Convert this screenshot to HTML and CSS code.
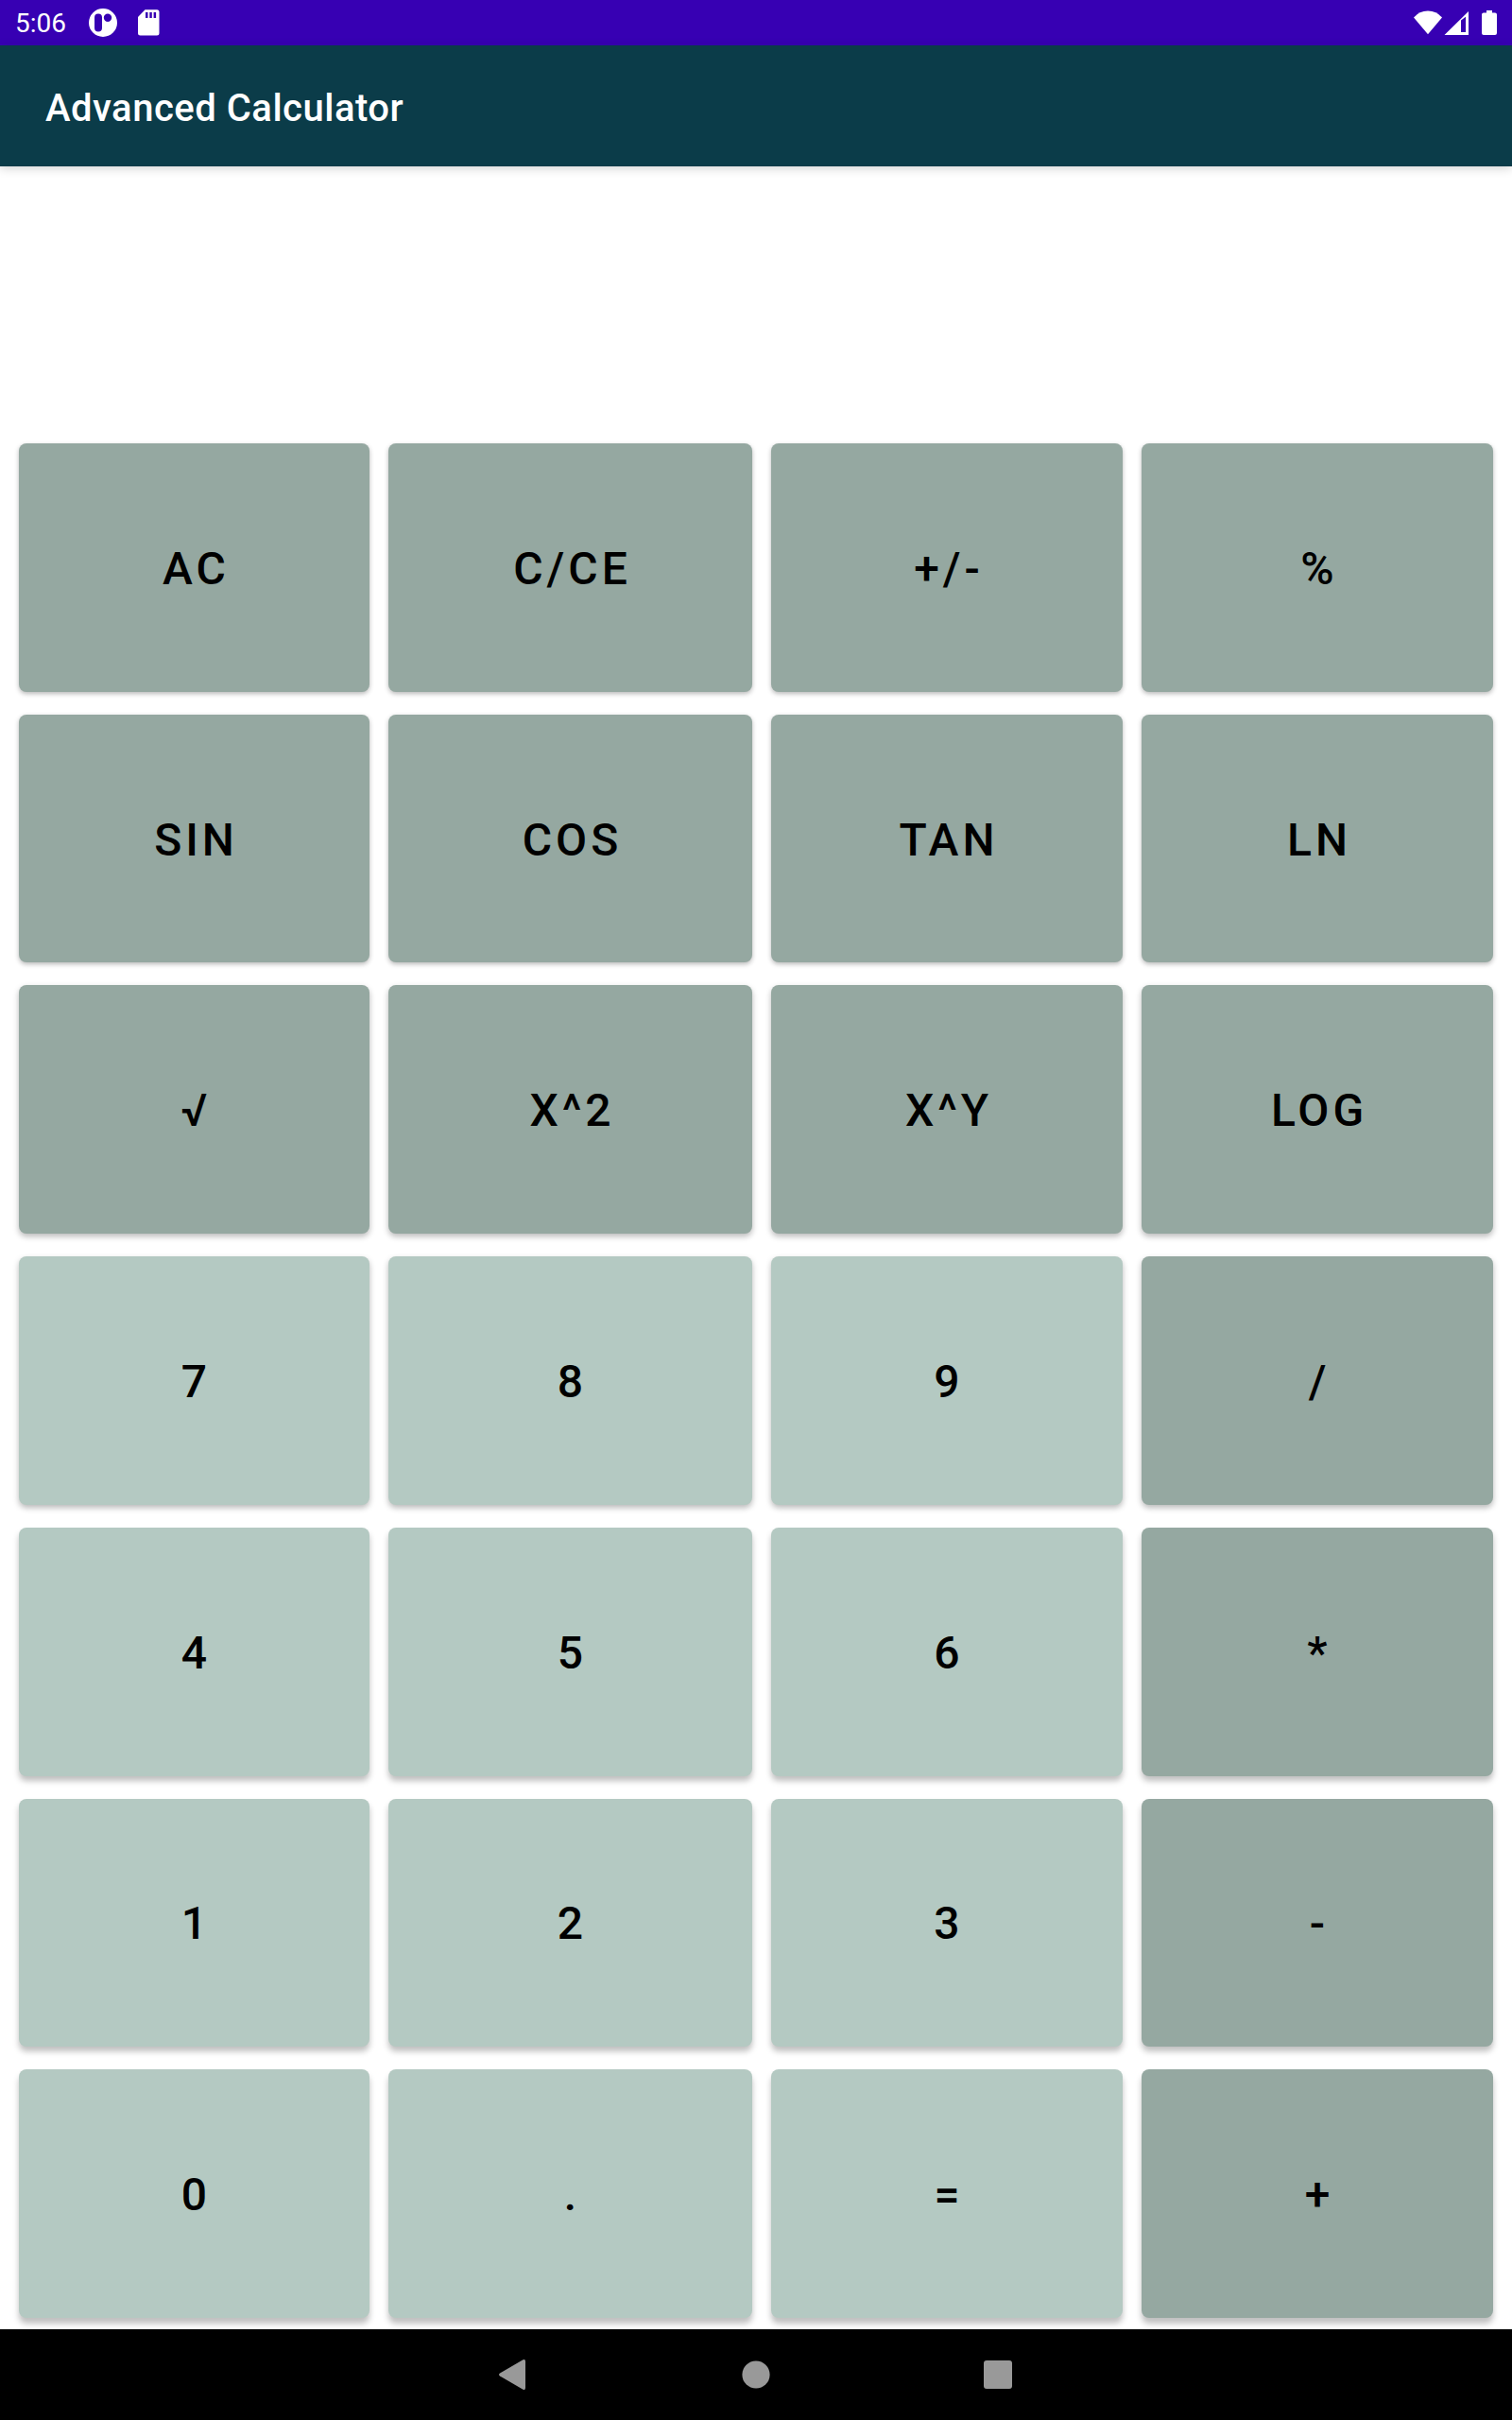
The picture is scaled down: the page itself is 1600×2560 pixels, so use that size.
FILE: index.html
```html
<!DOCTYPE html>
<html lang="en">
<head>
<meta charset="utf-8">
<meta name="viewport" content="width=device-width, initial-scale=1">
<title>Advanced Calculator</title>
<link rel="stylesheet" href="styles.css">
</head>
<body>
<div class="status-bar">
  <span class="clock">5:06</span>
  <svg class="status-icon" width="32" height="32" viewBox="0 0 32 32" aria-hidden="true">
    <path fill="#fff" fill-rule="evenodd" d="M16 1a15 15 0 1 0 0 30a15 15 0 1 0 0-30zM11 6.500a4 4 0 0 1 4 4v11a4 4 0 0 1-8 0v-11a4 4 0 0 1 4-4zM21 6.500a4.200 4.200 0 1 1 0 8.400a4.200 4.200 0 1 1 0-8.400z"/>
  </svg>
  <svg class="status-icon" width="24" height="32" viewBox="0 0 24 32" aria-hidden="true">
    <path fill="#fff" fill-rule="evenodd" d="M8.500 2.300H21a2.500 2.500 0 0 1 2.500 2.500V27a2.500 2.500 0 0 1-2.500 2.500H3.500A2.500 2.500 0 0 1 1 27V10zM9 5v6h2.500V5zM13.300 5v6h2.500V5zM17.600 5v6h2.500V5z"/>
  </svg>
  <svg class="system-icons" width="90" height="32" viewBox="0 0 90 32" aria-hidden="true">
    <g fill="#fff">
      <path d="M0 10.500Q6 3.500 15 3.500T30 10.500L15 28.300z"/>
      <path fill-rule="evenodd" d="M58 4v25H32.500zM50 13.500V26h5V9.800z"/>
      <path d="M77 3h6v2.500h3a2 2 0 0 1 2 2V27a2 2 0 0 1-2 2H74a2 2 0 0 1-2-2V7.500a2 2 0 0 1 2-2h3z"/>
    </g>
  </svg>
</div>
<header class="app-bar">
  <h1 class="app-title">Advanced Calculator</h1>
</header>
<main class="calculator">
  <output class="display" aria-label="Result"></output>
  <div class="keypad">
    <button class="key" type="button">AC</button>
    <button class="key" type="button">C/CE</button>
    <button class="key" type="button">+/-</button>
    <button class="key" type="button">%</button>
    <button class="key" type="button">SIN</button>
    <button class="key" type="button">COS</button>
    <button class="key" type="button">TAN</button>
    <button class="key" type="button">LN</button>
    <button class="key" type="button">√</button>
    <button class="key" type="button">X^2</button>
    <button class="key" type="button">X^Y</button>
    <button class="key" type="button">LOG</button>
    <button class="key key-light" type="button">7</button>
    <button class="key key-light" type="button">8</button>
    <button class="key key-light" type="button">9</button>
    <button class="key" type="button">/</button>
    <button class="key key-light" type="button">4</button>
    <button class="key key-light" type="button">5</button>
    <button class="key key-light" type="button">6</button>
    <button class="key" type="button">*</button>
    <button class="key key-light" type="button">1</button>
    <button class="key key-light" type="button">2</button>
    <button class="key key-light" type="button">3</button>
    <button class="key" type="button">-</button>
    <button class="key key-light" type="button">0</button>
    <button class="key key-light" type="button">.</button>
    <button class="key key-light" type="button">=</button>
    <button class="key" type="button">+</button>
  </div>
</main>
<nav class="nav-bar" aria-label="System navigation">
  <button class="nav-button" type="button" aria-label="Back">
    <svg width="32" height="32" viewBox="0 0 32 32"><path fill="#999" d="M25.500.3Q28 -.7 28 2V30Q28 32.700 25.500 31.700L1 17.500Q-1 16 1 14.500z"/></svg>
  </button>
  <button class="nav-button" type="button" aria-label="Home">
    <svg width="32" height="32" viewBox="0 0 32 32"><circle cx="16" cy="16" r="14.600" fill="#999"/></svg>
  </button>
  <button class="nav-button" type="button" aria-label="Recent apps">
    <svg width="32" height="32" viewBox="0 0 32 32"><rect x="1" y="1" width="30" height="30" rx="3" fill="#999"/></svg>
  </button>
</nav>
</body>
</html>
```
FILE: styles.css
```css
* {
  box-sizing: border-box;
}

body {
  display: flex;
  flex-direction: column;
  min-height: 100vh;
  margin: 0;
  background: #fff;
  font-family: Roboto, "Liberation Sans", sans-serif;
}

svg {
  display: block;
}

.status-bar {
  display: flex;
  align-items: center;
  height: 48px;
  padding: 0 14px 0 16px;
  background: #3700b3;
  color: #fff;
}

.clock {
  margin-right: 7px;
  padding-top: 2px;
  font-size: 28px;
  line-height: 32px;
}

.status-icon {
  margin-left: 16px;
}

.status-icon + .status-icon {
  margin-left: 20px;
}

.system-icons {
  margin-left: auto;
}

.app-bar {
  display: flex;
  align-items: center;
  height: 128px;
  padding: 6px 48px 0;
  background: #0b3c49;
  box-shadow: 0 2px 10px rgba(0, 0, 0, 0.18);
}

.app-title {
  margin: 0;
  color: #fff;
  font-size: 40px;
  font-weight: 500;
  letter-spacing: 0.0125em;
  line-height: 48px;
}

.calculator {
  display: flex;
  flex: 1;
  flex-direction: column;
  padding: 0 20px 12px;
}

.display {
  min-height: 293px;
  font-size: 96px;
  text-align: right;
}

.keypad {
  display: grid;
  flex: 1;
  grid-template-columns: 371fr 385fr 372fr 372fr;
  grid-auto-rows: 1fr;
  gap: 24px 20px;
}

.key {
  min-width: 0;
  padding: 3px 0 0 4px;
  border: 0;
  border-radius: 8px;
  background: #95a8a1;
  box-shadow: 0 2px 5px rgba(0, 0, 0, 0.28);
  color: #000;
  font-family: inherit;
  font-size: 48px;
  font-weight: 500;
  letter-spacing: 4px;
  line-height: 56px;
}

/* The shadow deepens toward the bottom of the screen. */
.key:nth-child(n + 9) {
  box-shadow: 0 3px 6px rgba(0, 0, 0, 0.28);
}

.key:nth-child(n + 17) {
  box-shadow: 0 5px 6px rgba(0, 0, 0, 0.25);
}

.key:nth-child(n + 25) {
  box-shadow: 0 6px 6px rgba(0, 0, 0, 0.25);
}

.key-light {
  background: #b4c9c2;
}

.nav-bar {
  display: flex;
  align-items: center;
  justify-content: center;
  gap: 160px;
  height: 96px;
  background: #000;
}

.nav-button {
  display: flex;
  align-items: center;
  justify-content: center;
  width: 96px;
  height: 96px;
  padding: 0;
  border: 0;
  background: none;
}
```
